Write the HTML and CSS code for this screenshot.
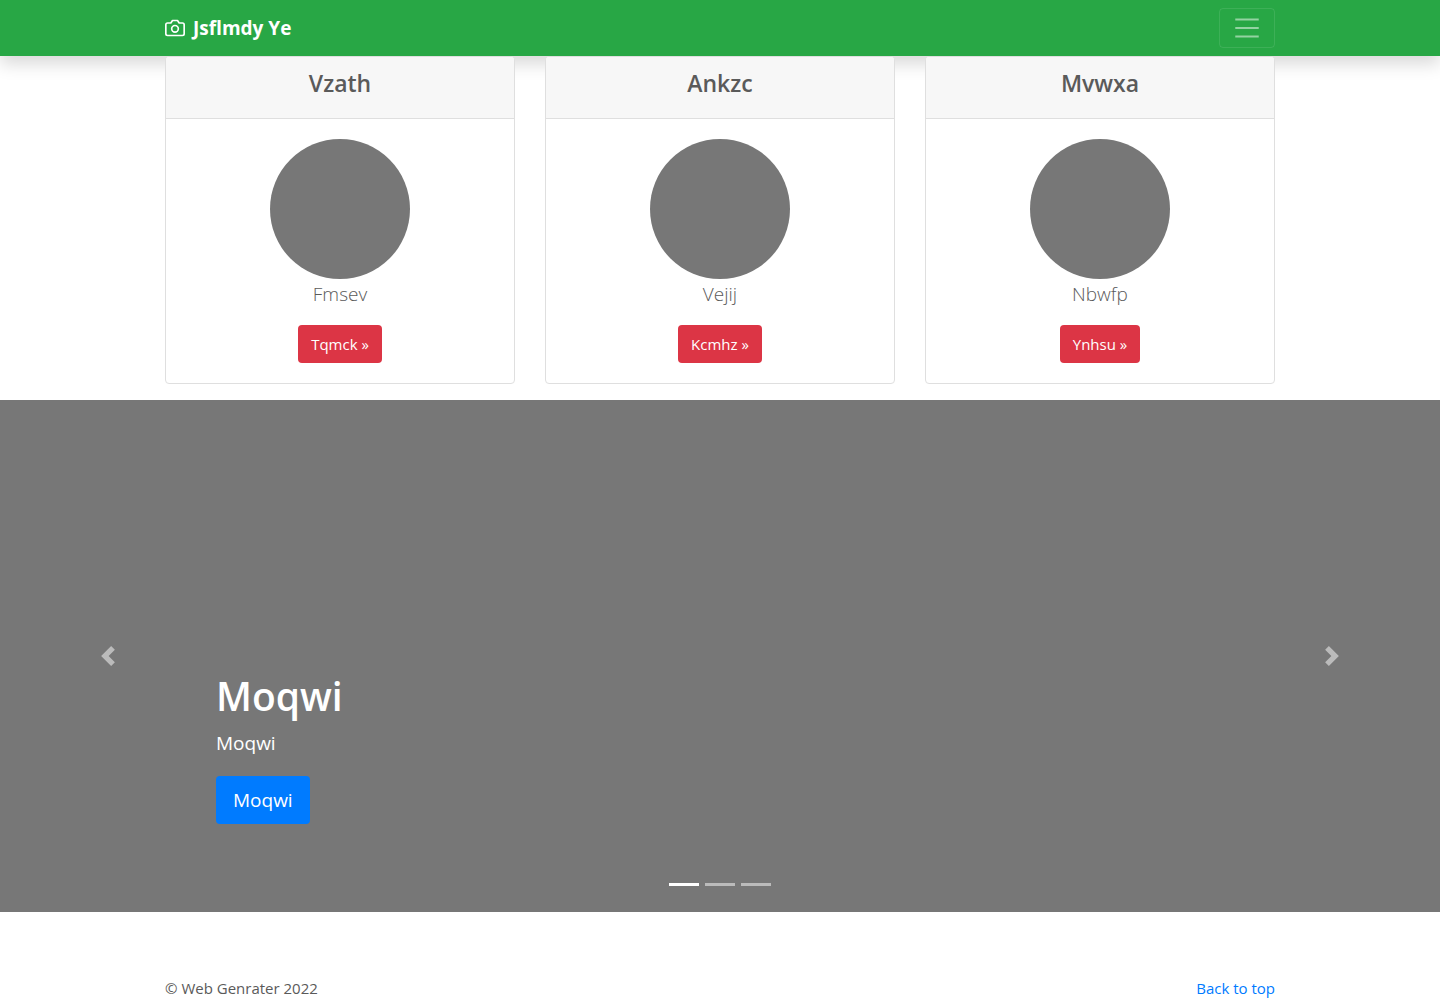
FILE: index.html
```html
<!DOCTYPE html>
<html lang="en">
<head>
  <meta charset="utf-8">
  <meta name="viewport" content="width=device-width, initial-scale=1">
  <title>Jsflmdy Ye</title>
  <link rel="stylesheet" href="styles.css">
</head>
<body>
  <header class="navbar">
    <div class="container navbar-inner">
      <a class="brand" href="#">
        <svg class="brand-icon" viewBox="0 0 24 24" aria-hidden="true"><path d="M23 19a2 2 0 0 1-2 2H3a2 2 0 0 1-2-2V8a2 2 0 0 1 2-2h4l2-3h6l2 3h4a2 2 0 0 1 2 2z"/><circle cx="12" cy="13" r="4"/></svg>
        <strong>Jsflmdy Ye</strong>
      </a>
      <button class="toggler" type="button" aria-label="Toggle navigation">
        <svg class="toggler-icon" viewBox="0 0 30 30" aria-hidden="true"><path d="M4 7h22M4 15h22M4 23h22"/></svg>
      </button>
    </div>
  </header>

  <main>
    <div class="container cards">
      <section class="card">
        <div class="card-header"><h2 class="card-title">Vzath</h2></div>
        <div class="card-body">
          <div class="avatar"></div>
          <p class="card-text">Fmsev</p>
          <a class="btn btn-danger" href="#">Tqmck »</a>
        </div>
      </section>
      <section class="card">
        <div class="card-header"><h2 class="card-title">Ankzc</h2></div>
        <div class="card-body">
          <div class="avatar"></div>
          <p class="card-text">Vejij</p>
          <a class="btn btn-danger" href="#">Kcmhz »</a>
        </div>
      </section>
      <section class="card">
        <div class="card-header"><h2 class="card-title">Mvwxa</h2></div>
        <div class="card-body">
          <div class="avatar"></div>
          <p class="card-text">Nbwfp</p>
          <a class="btn btn-danger" href="#">Ynhsu »</a>
        </div>
      </section>
    </div>

    <section class="carousel" aria-label="Slides">
      <button class="carousel-control" type="button" aria-label="Previous">
        <svg class="arrow" viewBox="0 0 8 8" aria-hidden="true"><path d="M5.25 0l-4 4 4 4 1.5-1.5L4.25 4l2.5-2.5L5.25 0z"/></svg>
      </button>
      <div class="carousel-content">
        <div class="caption">
          <h1 class="caption-title">Moqwi</h1>
          <p class="caption-text">Moqwi</p>
          <a class="btn btn-primary" href="#">Moqwi</a>
        </div>
        <div class="indicators">
          <button class="indicator active" type="button" aria-label="Slide 1"></button>
          <button class="indicator" type="button" aria-label="Slide 2"></button>
          <button class="indicator" type="button" aria-label="Slide 3"></button>
        </div>
      </div>
      <button class="carousel-control" type="button" aria-label="Next">
        <svg class="arrow" viewBox="0 0 8 8" aria-hidden="true"><path d="M2.75 0l-1.5 1.5L3.75 4l-2.5 2.5L2.75 8l4-4-4-4z"/></svg>
      </button>
    </section>
  </main>

  <footer class="container footer">
    <p class="copyright">© Web Genrater 2022</p>
    <a class="top-link" href="#">Back to top</a>
  </footer>
</body>
</html>
```

FILE: styles.css
```css
* {
  box-sizing: border-box;
}

body {
  margin: 0;
  background: #fff;
  color: #5a5a5a;
  font-family: "Open Sans", "Noto Sans", sans-serif;
  font-size: 15px;
  line-height: 24px;
}

h1, h2, p {
  margin: 0;
}

a {
  color: #007bff;
  text-decoration: none;
}

button {
  padding: 0;
  border: 0;
  background: transparent;
  cursor: pointer;
}

.container {
  width: 100%;
  max-width: 1140px;
  margin: 0 auto;
  padding: 0 15px;
}

.navbar {
  padding: 8px 0;
  background: #28a745;
  box-shadow: 0 8px 16px rgba(0, 0, 0, 0.15);
}

.navbar-inner {
  display: flex;
  align-items: center;
  justify-content: space-between;
}

.brand {
  display: flex;
  align-items: center;
  gap: 8px;
  color: #fff;
  font-size: 19px;
}

.brand-icon {
  width: 20px;
  height: 20px;
  fill: none;
  stroke: #fff;
  stroke-width: 2;
  stroke-linecap: round;
  stroke-linejoin: round;
}

.toggler {
  display: flex;
  align-items: center;
  justify-content: center;
  width: 56px;
  height: 40px;
  border: 1px solid rgba(255, 255, 255, 0.1);
  border-radius: 4px;
}

.toggler-icon {
  width: 32px;
  height: 32px;
  fill: none;
  stroke: rgba(255, 255, 255, 0.5);
  stroke-width: 2;
}

.cards {
  display: grid;
  grid-template-columns: repeat(3, 1fr);
  gap: 30px;
  position: relative;
  padding-bottom: 16px;
  text-align: center;
}

.card {
  overflow: hidden;
  border: 1px solid #dfdfdf;
  border-radius: 4px;
  background: #fff;
}

.card-header {
  padding: 12px 20px 20px;
  border-bottom: 1px solid #dfdfdf;
  background: #f7f7f7;
}

.card-title {
  font-size: 23px;
  font-weight: 600;
  line-height: 29px;
}

.card-body {
  display: flex;
  flex-direction: column;
  align-items: center;
  padding: 20px;
}

.avatar {
  width: 140px;
  height: 140px;
  border-radius: 50%;
  background: #777;
}

.card-text {
  margin-bottom: 16px;
  font-size: 19px;
  font-weight: 300;
  line-height: 30px;
}

.btn {
  display: inline-block;
  border-radius: 4px;
  color: #fff;
}

.btn-danger {
  padding: 7px 13px;
  background: #dc3545;
}

.btn-primary {
  padding: 9px 17px;
  background: #007bff;
  font-size: 19px;
  line-height: 30px;
}

.carousel {
  display: grid;
  grid-template-columns: 15% 1fr 15%;
  min-height: 512px;
  background: #777;
  color: #fff;
}

.carousel-control {
  display: flex;
  align-items: center;
  justify-content: center;
  opacity: 0.5;
}

.arrow {
  width: 20px;
  height: 20px;
  fill: #fff;
}

.carousel-content {
  display: flex;
  flex-direction: column;
  justify-content: flex-end;
}

.caption {
  padding-bottom: 59px;
}

.caption-title {
  margin-bottom: 8px;
  font-size: 39px;
  font-weight: 600;
  line-height: 48px;
}

.caption-text {
  margin-bottom: 18px;
  font-size: 19px;
  line-height: 30px;
}

.indicators {
  display: flex;
  justify-content: center;
  gap: 6px;
  padding-bottom: 26px;
}

.indicator {
  width: 30px;
  height: 3px;
  background: #fff;
  opacity: 0.5;
}

.indicator.active {
  opacity: 1;
}

.footer {
  display: flex;
  justify-content: space-between;
  padding-top: 64px;
}
```
